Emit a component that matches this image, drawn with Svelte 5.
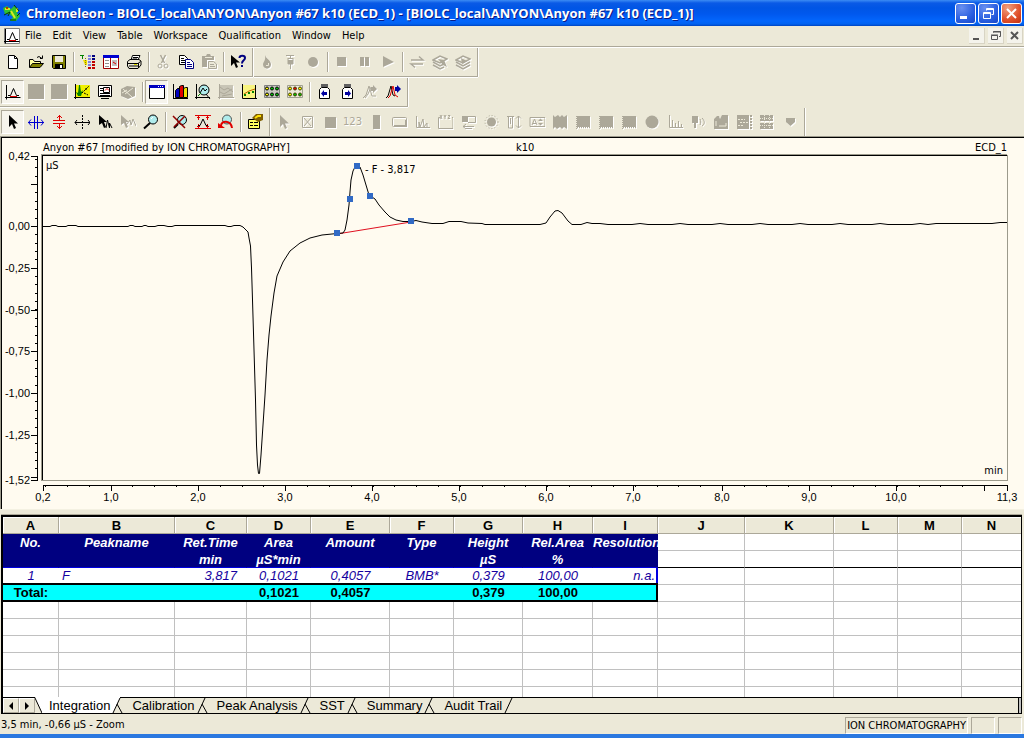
<script>
  const G = '#aca899';

  const icons = {
    file: `<path d="M3.5 1.5H9.5L12.5 4.5V14.5H3.5Z" fill="#fff" stroke="#000"/><path d="M9.5 2V4.5H12" stroke="#000"/>`,
    open: `<path d="M1.5 13V5.5H5L6.5 7.5H12.5V9" fill="#ffffa0" stroke="#000"/><path d="M1.5 13.5L4.5 9.5H15.5L12 13.5Z" fill="#808000" stroke="#000"/><path d="M9 3.5L11 2.5L14 4.5M14.5 1.5V4.5H12" stroke="#000"/>`,
    save: `<path d="M1.5 1.5H14.5V14.5H2.5L1.5 13.5Z" fill="#808000" stroke="#000"/><path d="M4 2H12V8H4Z" fill="#ece9d8"/><path d="M4 10H12V14H4Z" fill="#000"/><path d="M9 11H11V14H9Z" fill="#fff"/>`,
    tree: `<path d="M0 1.5H4M2.5 1V5" stroke="#008000"/><path d="M3 6H7V11H5Z" fill="#f0e000"/><path d="M5.5 4V13" stroke="#8b8000" stroke-dasharray="1 1"/><path d="M8 2H11M8 5H11M8 8H11M8 11H11" stroke="#8080e0" stroke-width="2"/><path d="M12 2H15M12 5H15" stroke="#000080" stroke-width="2"/><path d="M12 8H15M12 11H15M12 14H15" stroke="#c00000" stroke-width="2"/><path d="M8 14H11" stroke="#c00000" stroke-width="2"/>`,
    panel: `<path d="M.5 1.5H15.5V14.5H.5Z" fill="#fff" stroke="#a00000"/><path d="M0 1H16V4H0Z" fill="#0000d0"/><path d="M7.5 4V14" stroke="#a00000"/><path d="M2 6.5H6M2 9.5H6M2 12.5H6" stroke="#909090"/><path d="M9 6H14V12H9Z" fill="#c0c0c0"/><path d="M10 8L13 10" stroke="#e00000"/>`,
    print: `<path d="M5 6L6.5 1.5H14L12 6" fill="#fff" stroke="#000"/><path d="M7 3.5H12M6.5 5H11" stroke="#000"/><path d="M1.5 7.5L4 5.5H13L15 7V11L12 14.5H3L1.5 12Z" fill="#ece9d8" stroke="#000"/><path d="M2 9.5H12L14.5 7.5M3 12H12M12.5 9V14" stroke="#000"/><path d="M8 10.5H11" stroke="#e0e000"/>`,
    cut: `<path d="M5.5 1L9.5 9M10.5 1L6.5 9" stroke="${G}" stroke-width="1.5"/><circle cx="5" cy="12" r="2" stroke="${G}"/><circle cx="11" cy="12" r="2" stroke="${G}"/>`,
    copy: `<path d="M1.5 1.5H6.5L9.5 4.5V10.5H1.5Z" fill="#fff" stroke="#000"/><path d="M3 4.5H6M3 6.5H8M3 8.5H8" stroke="#000"/><path d="M7.5 5.5H12.5L15.5 8.5V14.5H7.5Z" fill="#fff" stroke="#000080"/><path d="M9 8.5H12M9 10.5H14M9 12.5H14" stroke="#000080"/>`,
    paste: `<path d="M1 2H5L6 0H9L10 2H13V6H6V13H1Z" fill="${G}"/><path d="M4 3.5H11" stroke="#ece9d8"/><path d="M7.5 7.5H12.5L15.5 10V14.5H7.5Z" stroke="${G}" fill="#ece9d8"/><path d="M9 10.5H13M9 12.5H14" stroke="${G}"/>`,
    help: `<path d="M1 1V12L4 9L6 14L8 13L6 8.5H10Z" fill="#000"/><path d="M9.5 4C9.5 1 15 1 15 4C15 6.5 12 6 12 9.5" stroke="#000080" stroke-width="2"/><path d="M11 11H13V13H11Z" fill="#000080"/>`,
    drop: `<path d="M6 1C7 5 12 6 12 10.5C12 16 4 16 4 10.5C4 8 7 7 6 1Z" fill="${G}"/><path d="M9.5 9V11.5H7" stroke="#ece9d8"/>`,
    syringe: `<path d="M4 1.5H12M8.5 2V5M5.5 4.5H11.5M6 5V10H11V5M8.5 10V15" stroke="${G}"/><path d="M6 6H11V10H6Z" fill="${G}"/>`,
    record: `<circle cx="8" cy="8" r="5" fill="${G}"/>`,
    stop: `<path d="M3 3H12V12H3Z" fill="${G}"/>`,
    pause: `<path d="M3 3H7V12H3ZM8 3H12V12H8Z" fill="${G}"/>`,
    play: `<path d="M3 2L14 8L3 13Z" fill="${G}"/>`,
    swap: `<path d="M2 6H14L10 2.5M14 10H2L6 13.5" stroke="${G}" stroke-width="1.5"/>`,
    stackA: `<path d="M1 6L8 2L15 5L8 9ZM1 8L8 12L12 10M1 11L8 15L12 13" stroke="${G}" stroke-width="1.5"/><path d="M6 5L12 6L15 13L11 11Z" fill="${G}"/>`,
    stackB: `<path d="M1 6L8 2L15 5L8 9ZM1 8L8 12L15 8M1 11L8 15L15 11" stroke="${G}" stroke-width="1.5"/><path d="M6 4L12 7L7 10Z" fill="${G}"/>`,
    chrom: `<path d="M1.5 1V15.5M0 13.5H15.5" stroke="#000"/><path d="M3 11.5H5.5L8.5 4.5L11.5 11.5H14" stroke="#000"/><path d="M5 12.5H12" stroke="#e00000"/>`,
    blank: `<path d="M0 0H16V15H0Z" fill="${G}"/>`,
    yellowplot: `<path d="M2 1H16V13H2Z" fill="#f0f000"/><path d="M1.5 0V15M0 13.5H16" stroke="#000"/><path d="M5 1H6L7 8L9 6L7 12H4L2 8L4 9Z" fill="#008000"/><path d="M8 9L15 2M10 9L14 11M12 4V6" stroke="#000" stroke-dasharray="2 1"/>`,
    report: `<path d="M1.5 1.5H14.5V12.5H1.5Z" fill="#fff" stroke="#000"/><path d="M3 4.5H6M3 6.5H6M3 9.5H13M3 11.5H13M4 14.5H12" stroke="#000"/><path d="M6.5 3.5H12.5V8.5H6.5Z" stroke="#000"/><path d="M8 6.5L10 4.5L12 6.5" stroke="#e00000"/>`,
    eraser: `<path d="M1 5L7 2L15 3V12L8 15L1 12Z" fill="${G}"/><path d="M3 5L12 13M5 10L13 4M2 9L7 6" stroke="#ece9d8"/>`,
    window: `<path d="M.5 1.5H15.5V14.5H.5Z" fill="#fff" stroke="#000"/><path d="M0 1H16V4H0Z" fill="#0000c0"/><path d="M9 2.5H15" stroke="#fff" stroke-dasharray="1 1"/>`,
    bars: `<path d="M1.5 0V14M1 14.5H16" stroke="#000"/><path d="M3.5 6.5L5.5 4.5H7.5V13.5H3.5Z" fill="#0000c0" stroke="#000"/><path d="M7.5 2.5L9.5 1.5H11.5V13.5H7.5Z" fill="#e00000" stroke="#000"/><path d="M11.5 4.5L13.5 3.5H15.5V13.5H11.5Z" fill="#f0e000" stroke="#000"/>`,
    zoomplot: `<path d="M1.5 0V15M0 13.5H15" stroke="#000"/><circle cx="9" cy="6" r="5" fill="#b0ecec" stroke="#000"/><path d="M5 9L8 4L10 7L12 5M11 10L15 15" stroke="#000"/><path d="M3 12L6 9" stroke="#008000"/>`,
    hatch: `<path d="M1 1H15V14H1Z" fill="#c8c5b6"/><path d="M1.5 0V15M0 13.5H16M2 3L6 6L10 4L15 8M2 8L6 10L14 5M4 12L14 10" stroke="${G}"/>`,
    trend: `<path d="M1 1H15V14H1Z" fill="#f8f480"/><path d="M1.5 0V14.5H16M14.5 1V14" stroke="#000"/><path d="M3 10L8 7L14 5" stroke="#c06000"/><path d="M3 10H5V12H3ZM7 8H9V10H7ZM11 7H13V9H11Z" fill="#008000"/>`,
    dotsGreen: `<path d="M.5 1.5H15.5V13.5H.5Z" fill="#c8c8c0" stroke="#808080"/><g fill="#00c000" stroke="#000"><circle cx="3" cy="4.5" r="1.5" fill="#ff0"/><circle cx="8" cy="4.5" r="1.5"/><circle cx="13" cy="4.5" r="1.5"/><circle cx="3" cy="10.5" r="1.5" fill="#ff0"/><circle cx="8" cy="10.5" r="1.5"/><circle cx="13" cy="10.5" r="1.5"/></g>`,
    dotsMixed: `<path d="M.5 1.5H15.5V13.5H.5Z" fill="#ece9d8" stroke="#a0a090"/><g fill="#ff0" stroke="#404000"><circle cx="3" cy="4.5" r="1.5"/><circle cx="8" cy="4.5" r="1.5" fill="#e00000"/><circle cx="13" cy="4.5" r="1.5" /><circle cx="3" cy="10.5" r="1.5"/><circle cx="8" cy="10.5" r="1.5" fill="#00c000"/><circle cx="13" cy="10.5" r="1.5" fill="#00c000"/></g>`,
    prev: `<path d="M5 0H12V3H5Z" fill="#606060"/><path d="M3.5 5.5L5.5 3.5H11.5L13.5 5.5V14.5H3.5Z" fill="#fff" stroke="#000"/><path d="M5 9.5L8 6V8H11V11H8V13Z" fill="#0000a0"/>`,
    next: `<path d="M5 0H12V3H5Z" fill="#606060"/><path d="M3.5 5.5L5.5 3.5H11.5L13.5 5.5V14.5H3.5Z" fill="#fff" stroke="#000"/><path d="M12 9.5L9 6V8H6V11H9V13Z" fill="#0000a0"/>`,
    peakGray: `<path d="M1 14L4 11L7 2L10 12H14M3 14L6 10L9 3" stroke="${G}"/><path d="M15 5L11 1V3H9V7H11V9Z" fill="${G}"/>`,
    peakRed: `<path d="M1 14L3 12L6 2L8 11L10 12" stroke="#000"/><path d="M3 14L5 12L8 2L10 11L13 13" stroke="#e00000"/><path d="M16 5L12 1V3H10V7H12V9Z" fill="#0000a0"/>`,
    arrow: `<path d="M4 1V13L7 10L9 15L11 14L9 9.5H13Z" fill="#000"/>`,
    hspread: `<path d="M0 8.5H16M6.5 2V15M9.5 2V15M3 5.5L.5 8.5L3 11.5M13 5.5L15.5 8.5L13 11.5" stroke="#0000d0"/>`,
    vspread: `<path d="M8.5 1V7M8.5 9V15M2 6.5H14M2 9.5H14M6 4L8.5 1.5L11 4M6 12L8.5 14.5L11 12" stroke="#e00000"/>`,
    cross: `<path d="M1 8.5H16M3 6L1 8.5L3 11M14 6L16 8.5L14 11" stroke="#000"/><path d="M8.5 1V16" stroke="#000" stroke-dasharray="2 1"/>`,
    pick: `<path d="M2 1V11L5 9L7 14L9 13L7 8H10Z" fill="#000"/><path d="M9 14L10.5 6L12.5 14V9L15 14" stroke="#000"/>`,
    pickGray: `<path d="M1 1V11L4 9L6 14L8 13L6 8H9Z" fill="${G}"/><path d="M7 10L10 6L11 11L13 5L16 12" stroke="${G}"/>`,
    lens: `<circle cx="10" cy="5.5" r="4.5" fill="#b0ecec" stroke="#000"/><path d="M8 5L10 3" stroke="#fff"/><path d="M7 9L1 14.5" stroke="#000" stroke-width="2"/>`,
    noLens: `<circle cx="10" cy="6" r="4.5" fill="#b0ecec" stroke="#000"/><path d="M6 10L2 14" stroke="#000" stroke-width="2"/><path d="M1 2L13 14M13 2L2 13" stroke="#900000" stroke-width="1.5"/>`,
    fit: `<path d="M0 1.5H16M0 14.5H16" stroke="#e00000"/><path d="M3.5 2V6M12.5 2V6M3.5 10V14M12.5 10V14M2 4L3.5 2.5L5 4M11 4L12.5 2.5L14 4M2 12L3.5 13.5L5 12M11 12L12.5 13.5L14 12" stroke="#e00000"/><path d="M3 11.5H5L8 5L11 11.5H13" stroke="#000"/>`,
    lensBack: `<circle cx="9" cy="5.5" r="4.5" fill="#b0ecec" stroke="#505050"/><path d="M3 12C3 6 13 6 14 14" stroke="#e00000" stroke-width="2"/><path d="M0 9L7 14H0Z" fill="#e00000"/>`,
    props: `<path d="M1.5 5.5H12.5V14.5H1.5Z" fill="#ffff60" stroke="#000"/><path d="M3 8.5H6M7 8.5H11M3 11.5H6M7 11.5H11" stroke="#000"/><path d="M5 4L9 0H16V6L11 8Z" fill="#806000"/><path d="M8 4L11 2H14" stroke="#ffe000" stroke-width="2"/>`,
    arrowG: `<path d="M4 1V13L7 10L9 15L11 14L9 9.5H13Z" fill="${G}"/>`,
    boxX: `<path d="M3.5 2.5H13.5V13.5H3.5ZM5 4L12 12M12 4L5 12" stroke="${G}"/>`,
    square: `<path d="M3 3H14V14H3Z" fill="${G}"/>`,
    vbar: `<path d="M5 1H12V15H5Z" fill="${G}"/>`,
    rect: `<rect x="1.5" y="3.5" width="14" height="9" rx="1" stroke="${G}"/><path d="M3 12H15V6" stroke="${G}" stroke-width="2"/>`,
    peaks: `<path d="M2.5 2V13.5H16M5 13V8L6 13L9 5L10 13L13 9V13" stroke="${G}"/>`,
    xyz: `<path d="M3 3.5H1.5V14.5H16V3.5H15M3 1L5 5M5 1L3 5M7 1L8 3L9 1M8 3V5M11 1.5H13L11 4.5H13" stroke="${G}"/>`,
    flag: `<path d="M2 2H8V8H2Z" fill="${G}"/><path d="M2 2.5H15.5V8.5H8M3 12.5H14M6 10L3 12.5L6 15M6 14.5H12" stroke="${G}"/>`,
    lamp: `<circle cx="8.5" cy="8" r="4.5" fill="${G}"/><circle cx="8.5" cy="8" r="6.5" stroke="${G}" stroke-dasharray="1 2"/>`,
    slider: `<path d="M2.5 3V14H6.5V3M1 2.5H8M4.5 4V10M12.5 2V14M10 4.5L12.5 2L15 4.5M10 11.5L12.5 14L15 11.5" stroke="${G}"/>`,
    spin: `<path d="M1 3.5H16V12.5H1ZM3 11L5.5 5L8 11M4 9.5H7" stroke="${G}"/><path d="M9 7L11.5 4.5L14 7ZM9 9L11.5 11.5L14 9Z" fill="${G}"/>`,
    film: `<path d="M1 1L3 3L6 1L8 3L10 1L12 3L15 1V15L12 13L10 15L8 13L5 15L3 13L1 15Z" fill="${G}"/>`,
    chip: `<path d="M2 2H15V13H2Z" fill="${G}"/><path d="M1.5 2V15M2 13.5H15" stroke="${G}" stroke-dasharray="1 1"/>`,
    disc: `<circle cx="8" cy="8" r="6.5" fill="${G}"/>`,
    sticks: `<path d="M2.5 1V13.5H16M5.5 6V13M8.5 9V13M11.5 7V13M14.5 10V13" stroke="${G}"/>`,
    sound: `<path d="M2 2H8V9H6V14H4V9H2Z" fill="${G}"/><path d="M10 5C11 7 11 9 10 11M12 4C15 7 15 10 12 12" stroke="${G}"/>`,
    blocks: `<path d="M1 5L4 2H6L7 5L9 1H15V15H1Z" fill="${G}"/><path d="M3 12V7M6 12H13V9" stroke="#ece9d8"/>`,
    grid1: `<path d="M1 1H13V15H1Z" fill="${G}"/><path d="M2 5.5H9M4 8.5H12M2 11.5H8" stroke="#ece9d8" stroke-dasharray="2 1"/><path d="M15 1V15" stroke="${G}" stroke-width="2" stroke-dasharray="2 1"/>`,
    grid2: `<path d="M1 1H14V7H1ZM1 9H14V15H1Z" fill="${G}"/><path d="M1 4.5H14M1 11.5H14M5.5 1V15M10.5 1V15" stroke="#ece9d8" stroke-dasharray="1 1"/>`,
    down: `<path d="M4 4H13V8L8.5 12L4 8Z" fill="${G}"/>`
  };

  // "|" marks a separator; a leading "*" marks a latched button, "-" a disabled one
  const bars = [
    [
      'file open save | tree panel print | -cut copy -paste | help',
      '-drop -syringe -record | -stop -pause -play | -swap -stackA -stackB'
    ],
    ['*chrom -blank -blank yellowplot report -eraser | *window bars zoomplot -hatch trend dotsGreen dotsMixed | prev next -peakGray peakRed'],
    [
      '*arrow hspread vspread cross pick -pickGray lens | noLens fit lensBack | props',
      '-arrowG -boxX -square -123 -vbar -rect -peaks -xyz -flag -lamp -slider -spin -film -chip -chip -chip -disc -sticks -sound -blocks -grid1 -grid2 -down'
    ]
  ].map((row) => row.map((g) => g.split(' ')));

  const menus = ['File', 'Edit', 'View', 'Table', 'Workspace', 'Qualification', 'Window', 'Help'];

  const yLabels = [['0,42', 156], ['0,00', 226], ['-0,25', 268], ['-0,50', 310], ['-0,75', 351], ['-1,00', 393], ['-1,25', 435], ['-1,52', 480]];
  const xLabels = [['0,2', 43], ['1,0', 111], ['2,0', 198], ['3,0', 285], ['4,0', 372], ['5,0', 459], ['6,0', 546], ['7,0', 633], ['8,0', 722], ['9,0', 809], ['10,0', 896], ['11,3', 1007]];
  const yMajor = [156, 184, 226, 268, 310, 351, 393, 435, 477, 480];
  const yMinor = Array.from({ length: 39 }, (_, i) => Math.round(159 + i * 8.36));
  const xMajor = [43, 111, 198, 285, 372, 459, 546, 633, 722, 809, 896, 984, 1007];
  const xMinor = Array.from({ length: 44 }, (_, i) => Math.round(45 + i * 21.84));

  let tail = '';
  for (let x = 600; x < 1000; x += 8) tail += ` L${x} ${x % 5 === 0 ? 223.5 : 224.5 - (x > 930 ? 1 : 0)}`;
  const curve =
    'M43 226.5H50L52 225.5H56L58 226.5H66L68 225.5H76L78 226.5H128L130 225.5H133L135 226.5H142L144 225.5H146L148 226.5H155L158 225.5H164L168 226.5H172L175 225.5H225L228 226.5H231L234 225.5H240L243 227L246 230L248 232L249 238L250.5 246L251.5 268L252.5 300L254 350L255.5 400L256.5 445L257.5 465L258.5 473.5H259.5L261 455L263 425L265 395L267 360L269 335L271 316L274 293L277 276L283 262L290 251L300 243L310 238L322 235L337 233.5L343 233L345 230L347 220L349 205L350 192L351 180L353 171L355 167L357 166L360 167L363 175L366 185L369 195L375 199L379 205L385 212L390 217L396 220L403 221.5L411 221.5L416 220.5L422 222L432 223.5H443L449 221.5H461L468 223L482 223.5L485 224.5H540L546 223L550 217L555 211L558 210.5L562 213L568 221L572 224.5H581L587 222.5L592 223.5' + tail + ' L1000 222.5H1007';

  const nodes = [[337, 233], [350, 199], [357, 166], [370, 196], [411, 221]];

  const cols = [56, 116, 72, 64, 79, 64, 69, 70, 65, 87, 89, 64, 64];
  const letters = 'ABCDEFGHIJKLMN'.split('');
  const head1 = ['No.', 'Peakname', 'Ret.Time', 'Area', 'Amount', 'Type', 'Height', 'Rel.Area', 'Resolution'];
  const head2 = ['', '', 'min', 'µS*min', '', '', 'µS', '%', ''];
  const peak = ['1', 'F', '3,817', '0,1021', '0,4057', 'BMB*', '0,379', '100,00', 'n.a.'];
  const total = ['Total:', '', '', '0,1021', '0,4057', '', '0,379', '100,00', ''];
  const rest = letters.slice(9);
  const tabs = ['Integration', 'Calibration', 'Peak Analysis', 'SST', 'Summary', 'Audit Trail'];
  let active = $state('Integration');
</script>

<main>
  <header class="title">
    <svg class="logo" width="20" height="20" viewBox="0 0 20 20" fill="none">
      <path d="M1 5L5 3L9 6L12 3L16 6L15 10L18 13L14 18L8 18L11 14L7 11L3 11Z" fill="#30c030" />
      <path d="M3 6H8M9 8L13 15M15 5V9" stroke="#d8e820" stroke-width="2" />
      <path d="M2 12L8 9L6 13M12 2L17 8M8 17H14M15 13L18 10" stroke="#063806" />
      <circle cx="5" cy="5" r="1" fill="#d00000" />
    </svg>
    <h1>Chromeleon - BIOLC_local\ANYON\Anyon #67 k10 (ECD_1) - [BIOLC_local\ANYON\Anyon #67 k10 (ECD_1)]</h1>
    <div class="winbtns">
      <button aria-label="Minimize"><svg width="19" height="19" viewBox="0 0 19 19"><path d="M4 12H11V15H4Z" fill="#fff" /></svg></button>
      <button aria-label="Restore"><svg width="19" height="19" viewBox="0 0 19 19" fill="none" stroke="#fff"><path d="M7.5 6.5V4.5H14.5V10.5H12.5M4.5 8.5H11.5V14.5H4.5ZM7 5.5H15M4 9.5H12" /></svg></button>
      <button class="close" aria-label="Close"><svg width="19" height="19" viewBox="0 0 19 19"><path d="M5 5L14 14M14 5L5 14" stroke="#fff" stroke-width="2" /></svg></button>
    </div>
  </header>

  <nav class="menu">
    <svg class="doc" width="16" height="16" viewBox="0 0 16 16" fill="none">
      <path d="M.5 .5H15.5V15.5H.5Z" fill="#fff" stroke="#808080" />{@html icons.chrom}
    </svg>
    {#each menus as m}<button>{m}</button>{/each}
    <div class="docbtns">
      <button aria-label="Minimize document"><svg width="15" height="15" viewBox="0 0 15 15"><path d="M4 10H10V12H4Z" fill="#555" /></svg></button>
      <button aria-label="Restore document"><svg width="15" height="15" viewBox="0 0 15 15" fill="none" stroke="#555"><path d="M5.5 4.5V3.5H12.5V8.5H11M3.5 7.5H9.5V11.5H3.5ZM5 4H13M3 7H10" /></svg></button>
      <button aria-label="Close document"><svg width="15" height="15" viewBox="0 0 15 15"><path d="M4 4L11 11M11 4L4 11" stroke="#555" stroke-width="2" /></svg></button>
    </div>
  </nav>

  {#each bars as row}
    <div class="bar">
      {#each row as group}
        <div class="group">
          {#each group as entry}
            {#if entry === '|'}
              <i class="sep"></i>
            {:else}
              {@const name = entry.replace(/^[-*]/, '')}
              <button class="tool" class:on={entry[0] === '*'} class:off={entry[0] === '-'} disabled={entry[0] === '-'} aria-label={name}>
                {#if name === '123'}
                  <span>123</span>
                {:else}
                  <svg width="16" height="16" viewBox="0 0 16 16" fill="none">{@html icons[name]}</svg>
                {/if}
              </button>
            {/if}
          {/each}
        </div>
      {/each}
    </div>
  {/each}

  <svg class="chart" viewBox="0 136 1024 374">
    <g shape-rendering="crispEdges" fill="none">
      <path d="M0 136.5H1024M.5 136V510" stroke="#9c9a8c" />
      <path d="M1 137.5H1024M1.5 137V509" stroke="#000" />
      <path d="M41.5 480V154.5H1007" stroke="#9c9a8c" />
      <path d="M42.5 480V155.5H1007" stroke="#000" />
      <path d="M41 480.5H1007.5V155" stroke="#9c9a8c" />
      <path d="M37.5 156V481M43 485.5H1008" stroke="#000" />
      {#each yMajor as y}<path d="M31 {y + 0.5}H37" stroke="#000" />{/each}
      {#each yMinor as y}<path d="M35 {y + 0.5}H37" stroke="#000" />{/each}
      {#each xMajor as x}<path d="M{x + 0.5} 485V491" stroke="#000" />{/each}
      {#each xMinor as x}<path d="M{x + 0.5} 485V487" stroke="#000" />{/each}
      <path d="M0 509.5H1024" stroke="#f4f1e2" />
    </g>
    <path d="M337 234L411 222" stroke="#e01020" />
    <path d={curve} fill="none" stroke="#000" />
    {#each nodes as [x, y]}<rect x={x - 3} y={y - 3} width="6" height="6" fill="#316ac5" />{/each}
    <g class="captions">
      <text x="43" y="151">Anyon #67 [modified by ION CHROMATOGRAPHY]</text>
      <text x="516" y="151">k10</text>
      <text x="1007" y="151" text-anchor="end">ECD_1</text>
      <text x="46" y="169">µS</text>
      <text x="365" y="173">- F - 3,817</text>
      <text x="1003" y="474" text-anchor="end">min</text>
    </g>
    <g class="scale">
      {#each yLabels as [t, y]}<text x="30" y={y + 4} text-anchor="end">{t}</text>{/each}
      {#each xLabels as [t, x]}<text {x} y="501" text-anchor="middle">{t}</text>{/each}
    </g>
  </svg>

  <section class="sheet">
    <table>
      <colgroup>{#each cols as w}<col style="width: {w}px" />{/each}<col /></colgroup>
      <thead>
        <tr>{#each letters as l}<th scope="col">{l}</th>{/each}</tr>
      </thead>
      <tbody>
        <tr class="navy">{#each head1 as h}<td>{h}</td>{/each}{#each rest as _}<td class="plain"></td>{/each}</tr>
        <tr class="navy second">{#each head2 as h}<td>{h}</td>{/each}{#each rest as _}<td class="plain"></td>{/each}</tr>
        <tr class="peak">{#each peak as c}<td>{c}</td>{/each}{#each rest as _}<td class="plain"></td>{/each}</tr>
        <tr class="total">{#each total as c}<td>{c}</td>{/each}{#each rest as _}<td class="plain"></td>{/each}</tr>
        {#each [1, 2, 3, 4, 5] as _}<tr>{#each letters as _}<td></td>{/each}</tr>{/each}
        <tr class="cutoff">{#each letters as _}<td></td>{/each}</tr>
      </tbody>
    </table>
  </section>

  <div class="tabs">
    <button class="nav" aria-label="Previous sheet"><svg width="6" height="8" viewBox="0 0 6 8"><path d="M5 0V8L1 4Z" /></svg></button>
    <button class="nav" aria-label="Next sheet"><svg width="6" height="8" viewBox="0 0 6 8"><path d="M1 0V8L5 4Z" /></svg></button>
    <svg class="edge" width="7" height="15" viewBox="0 0 7 15"><path d="M0 -1L7 15V-1Z" fill="#fff" /><path d="M0 0L7 15" stroke="#000" /></svg>
    {#each tabs as t, i}
      <button class="tab" class:active={active === t} onclick={() => (active = t)}>{t}</button>
      <svg class="edge" width="12" height="15" viewBox="0 0 12 15" fill="none">
        {#if active === t}<path d="M0 -1H7V0L0 15Z" fill="#fff" />{/if}
        <path d="M0 15L7 0" stroke="#000" />
        {#if i < tabs.length - 1}<path d="M4 6L9 15" stroke="#000" />{/if}
      </svg>
    {/each}
    <i class="grip"></i>
  </div>

  <footer>
    <span class="msg">3,5 min, -0,66 µS - Zoom</span>
    <span class="cell user">ION CHROMATOGRAPHY</span>
    <span class="cell"></span>
    <span class="cell"></span>
  </footer>
</main>

<style>
  :global(body) { margin: 0; background: #ece9d8; }
  main {
    display: flex;
    flex-direction: column;
    min-height: 100vh;
    background: #ece9d8;
    color: #000;
    font: 11px/14px "DejaVu Sans Condensed", "Noto Sans", sans-serif;
  }
  button { margin: 0; padding: 0; border: 0; background: none; font: inherit; color: inherit; }
  svg { display: block; }

  .title {
    display: flex;
    align-items: center;
    height: 26px;
    padding: 0 2px;
    background: linear-gradient(#3c8cf4 0, #0a5ae6 3px, #0055e5 8px, #0058ee 14px, #0366fc 21px, #0262f0 24px, #0044c0 26px);
  }
  .logo { margin-right: 4px; }
  h1 {
    flex: 1;
    margin: 0;
    overflow: hidden;
    white-space: nowrap;
    color: #fff;
    font: bold 13px/20px "Open Sans", sans-serif;
    text-shadow: 1px 1px #0a1883;
  }
  .winbtns { display: flex; gap: 2px; }
  .winbtns button {
    width: 21px;
    height: 21px;
    border: 1px solid #fff;
    border-radius: 3px;
    background: radial-gradient(circle at 30% 20%, #6a90f0, #2a5fe0 60%, #1646c8);
  }
  .winbtns .close { background: radial-gradient(circle at 30% 20%, #f0a080, #e0502a 60%, #c03010); }

  .menu {
    display: flex;
    align-items: center;
    height: 20px;
    padding-left: 4px;
    border-bottom: 1px solid #aca899;
    box-shadow: 0 1px #fff;
  }
  .menu > button { padding: 0 4px 0 5px; margin-right: 2px; }
  .docbtns { display: flex; gap: 3px; margin-left: auto; padding-right: 1px; }
  .docbtns button { width: 16px; height: 16px; background: #f4f3ec; border-right: 1px solid #d8d4c4; border-bottom: 1px solid #d8d4c4; }

  .bar { display: flex; box-sizing: border-box; height: 30px; padding-top: 1px; }
  .group {
    display: flex;
    align-items: center;
    padding: 0 3px 0 1px;
    border-bottom: 1px solid #aca899;
    border-right: 1px solid #aca899;
    box-shadow: 0 1px #fff, 1px 0 #fff;
  }
  .group + .group { margin-left: 1px; }
  .bar:has(+ .chart) { height: 29px; }
  .bar:has(+ .chart) .group { border-bottom: 0; box-shadow: 1px 0 #fff; }
  .tool { display: flex; align-items: center; justify-content: center; width: 23px; height: 24px; box-sizing: border-box; }
  .tool.on {
    border: 1px solid;
    border-color: #aca899 #fff #fff #aca899;
    background: #f6f4ec;
  }
  .tool.off svg { filter: drop-shadow(1px 1px 0 #fff); }
  .tool span { color: #aca899; font: 10px/14px "DejaVu Sans", sans-serif; text-shadow: 1px 1px #fff; }
  .sep { width: 1px; height: 20px; margin: 0 2px 0 3px; background: #aca899; box-shadow: 1px 0 #fff; flex: none; }

  .chart { width: 100%; height: auto; background: #fffbf0; }
  .captions { font: 11px "DejaVu Sans Condensed", "Noto Sans", sans-serif; }
  .scale { font: 11px "Liberation Sans", Arial, sans-serif; }

  .sheet {
    flex: 1;
    margin: 5px 2px 0 1px;
    border: solid #000;
    border-width: 2px 1px 0 2px;
    box-shadow: 0 -1px #aca899;
    background: #fff;
    overflow: hidden;
  }
  table {
    width: 100%;
    table-layout: fixed;
    border-collapse: separate;
    border-spacing: 0;
    font: 13px/15px "Liberation Sans", Arial, sans-serif;
  }
  td, th {
    height: 17px;
    box-sizing: border-box;
    padding: 1px 0 0;
    white-space: nowrap;
    text-align: center;
    border-right: 1px solid #c0c0c0;
    border-bottom: 1px solid #c0c0c0;
  }
  th { background: #ece9d8; border-color: #aca899; box-shadow: inset 1px 1px #fff; font-weight: bold; }
  td:last-child, th:last-child { border-right: 0; }
  .navy td:not(.plain) { background: #000080; color: #fff; border-color: #000080; font-weight: bold; font-style: italic; }
  .second td { border-bottom-color: #000; }
  .navy.second td:not(.plain) { border-bottom-color: #0000e0; }
  .peak td:not(.plain), .total td:not(.plain) { border-right: 0; border-bottom: 2px solid #000; line-height: 14px; }
  .peak td:not(.plain) { color: #1400a0; font-style: italic; }
  .peak td:nth-child(2) { text-align: left; padding-left: 3px; }
  .peak td:nth-child(3) { text-align: right; padding-right: 10px; }
  .peak td:nth-child(9) { text-align: right; padding-right: 3px; box-shadow: inset -2px 0 #0000e0; }
  .total td:not(.plain) { background: #0ff; font-weight: bold; }
  .total td:nth-child(9) { box-shadow: inset -2px 0 #000; }
  .cutoff td { height: 10px; border-bottom: 0; }

  .tabs {
    display: flex;
    align-items: stretch;
    height: 15px;
    margin: 0 2px 0 1px;
    border: solid #000;
    border-width: 1px 1px 1px 2px;
    font: 13px/15px "Liberation Sans", Arial, sans-serif;
  }
  .nav {
    display: flex;
    align-items: center;
    justify-content: center;
    width: 16px;
    box-sizing: border-box;
    border: 1px solid;
    border-color: #fff #aca899 #aca899 #fff;
  }
  .edge { flex: none; overflow: visible; }
  .tab { padding: 0 3px 0 7px; white-space: nowrap; }
  .tab.active { background: #fff; box-shadow: 0 -1px #fff; }
  .grip { width: 2px; margin-left: auto; border-left: 1px solid #000; background: #c0c0c0; }

  footer {
    display: flex;
    align-items: center;
    gap: 3px;
    box-sizing: border-box;
    height: 24px;
    padding: 2px 2px 0 1px;
    border-bottom: 4px solid #2a78e0;
  }
  .msg { flex: 1; }
  .cell { width: 22px; height: 15px; border: 1px solid; border-color: #aca899 #fff #fff #aca899; }
  .cell.user { width: auto; padding: 0 1px; line-height: 15px; }
</style>
